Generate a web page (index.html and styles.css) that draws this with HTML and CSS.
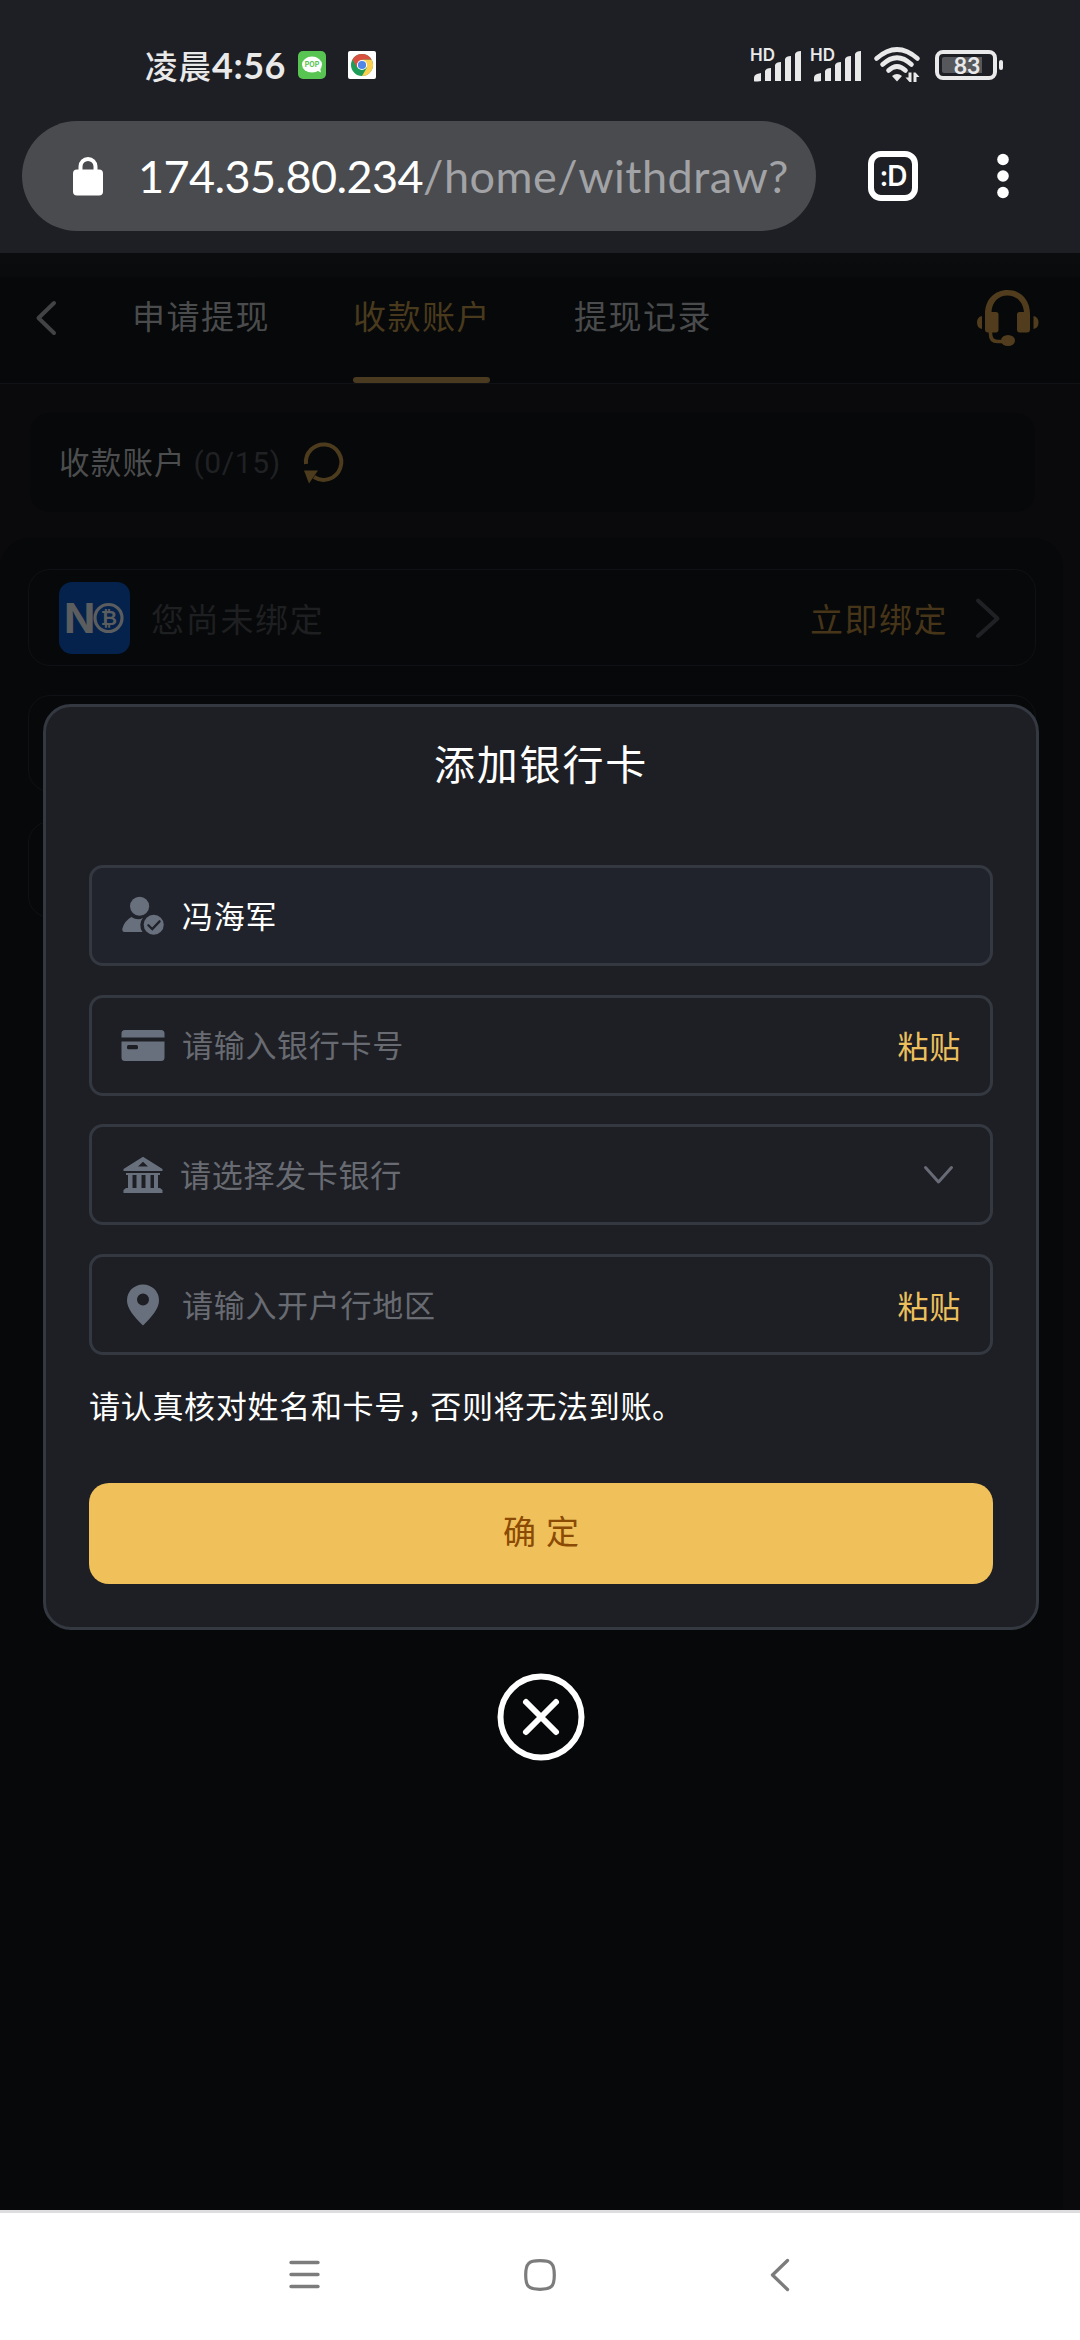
FILE: index.html
```html
<!DOCTYPE html>
<html lang="zh-CN">
<head>
<meta charset="utf-8">
<title>收款账户</title>
<link rel="stylesheet" href="styles.css">
</head>
<body>
<div class="screen">
  <div class="statusbar">
    <span class="clock">凌晨<b>4:56</b></span>
    <svg class="app-line" width="28" height="28" viewBox="0 0 28 28"><rect width="28" height="28" rx="5" fill="#58c452"/><ellipse cx="14" cy="13.600" rx="10" ry="8" fill="#fff"/><path d="M18 19l5 2.400-1-5z" fill="#fff"/><text x="14" y="16.300" text-anchor="middle" class="pop">POP</text></svg>
    <svg class="app-chrome" width="28" height="28" viewBox="0 0 28 28"><rect width="28" height="28" rx="2" fill="#fff"/><circle cx="14" cy="14" r="11" fill="#1f9d58"/><path d="M18.800 16.800L14 25a11 11 0 0 0 9.530-16.500H14z" fill="#fbcf50"/><path d="M14 14L9.200 16.800 4.470 8.500A11 11 0 0 1 23.530 8.500H14z" fill="#d8503f"/><circle cx="14" cy="14" r="5.100" fill="#fff"/><circle cx="14" cy="14" r="4.100" fill="#4f86e8"/></svg>
    <svg class="signals" width="110" height="34" viewBox="0 0 110 34" fill="#e9e9ea"><text x="-1" y="12.500" class="hd" textLength="25">HD</text><g id="bars"><path d="M3 33v-3q0-3 3-4l4-1v8q-7 1-7 0zM14 33V23q1-3 6-3v13zM24 33V17q1-3 6-3v19zM34 33V11q1-3 6-3v25zM44 33V6q1-3 6-3v30z"/></g><text x="59" y="12.500" class="hd" textLength="25">HD</text><use href="#bars" x="60"/></svg>
    <svg class="wifi" width="46" height="35" viewBox="0 0 46 35"><g fill="none" stroke="#e9e9ea" stroke-width="4.600" stroke-linecap="round"><path d="M2.500 11.500Q23-6.500 43.500 11.500M8.500 17.500Q23 4 37.500 17.500M14.500 23.500Q23 15.500 31.500 23.500"/></g><path d="M18 29q5-4 10 0l-5 5.500z" fill="#e9e9ea"/><g fill="#e9e9ea"><path d="M34.500 25.500h3V35h-2l-4-4.500h3zM39.500 25.500h2l4 4.500h-3v5h-3z"/></g></svg>
    <svg class="battery" width="68" height="30" viewBox="0 0 68 30"><rect x="2" y="2" width="58" height="26" rx="6" fill="none" stroke="#e9e9ea" stroke-width="4"/><path d="M9 7h38v16H9q-2 0-2-2V9q0-2 2-2z" fill="#56585c"/><rect x="64" y="10" width="4" height="10" rx="2" fill="#e9e9ea"/><text x="32" y="23.500" text-anchor="middle" class="level">83</text></svg>
  </div>
  <div class="urlbar">
    <div class="address">
      <svg width="30" height="40" viewBox="0 0 30 40"><path d="M7.500 16V10.500a7.500 7.500 0 0 1 15 0V16" fill="none" stroke="#fff" stroke-width="4"/><rect y="13.500" width="30" height="26" rx="4" fill="#fff"/></svg>
      <span class="url"><span class="host">174.35.80.234</span><span class="path">/home/withdraw?</span></span>
    </div>
    <div class="tabcount">:D</div>
    <svg class="more" width="12" height="46" viewBox="0 0 12 46" fill="#fff"><circle cx="6" cy="6.500" r="5.800"/><circle cx="6" cy="23" r="5.800"/><circle cx="6" cy="39.500" r="5.800"/></svg>
  </div>

  <div class="page">
    <div class="header">
      <svg class="back" width="22" height="36" viewBox="0 0 22 36"><path d="M19 3L3.500 18 19 33" fill="none" stroke="#424344" stroke-width="4" stroke-linecap="round" stroke-linejoin="round"/></svg>
      <div class="tabs"><span class="tab">申请提现</span><span class="tab active">收款账户</span><span class="tab">提现记录</span></div>
      <svg class="service" width="62" height="56" viewBox="0 0 62 56"><g fill="#513d1d"><path d="M5 26v13q-5-1-5-6.500T5 26zM56.500 26v13q5-1 5-6.500t-5-6.500zM19 22q2.500 0 2.500 2.500v15q0 3-2.500 3h-8q-3 0-3-3V24C8 9 18 0 30.500 0S53 9 53 24v15.500q0 3-3 3h-7.500q-2.500 0-2.500-3v-15q0-2.500 2.500-2.500H47C46 11.500 39 5.500 30.500 5.500S15 11.500 14.500 22z"/><ellipse cx="31" cy="50.500" rx="7" ry="5.500"/></g><path d="M13.500 41v3q0 7.500 7 7.500h8" fill="none" stroke="#513d1d" stroke-width="3.600"/></svg>
    </div>
    <div class="summary">
      <span class="label">收款账户</span><span class="count">(0/15)</span>
      <svg width="40" height="42" viewBox="0 0 40 42"><path d="M2 22A17.700 17.700 0 1 1 10 35" fill="none" stroke="#4c3b1d" stroke-width="4"/><path d="M0 28.500h14L5 41.500z" fill="#4c3b1d"/></svg>
    </div>
    <div class="accounts">
      <div class="account">
        <svg class="nb" width="71" height="72" viewBox="0 0 71 72"><rect width="71" height="72" rx="13" fill="#04224c"/><text x="5" y="51" class="logo-n">N</text><circle cx="49.500" cy="36" r="13.500" fill="none" stroke="#5b5d5f" stroke-width="3.200"/><text x="50" y="43" text-anchor="middle" class="logo-b">₿</text></svg>
        <span class="unbound">您尚未绑定</span><span class="bind">立即绑定</span>
        <svg width="26" height="40" viewBox="0 0 26 40"><path d="M3 2.500l19.500 18L3 38" fill="none" stroke="#202124" stroke-width="4" stroke-linecap="round" stroke-linejoin="round"/></svg>
      </div>
      <div class="account"></div>
      <div class="account"></div>
    </div>

    <div class="overlay">
      <div class="modal">
        <h1>添加银行卡</h1>
        <div class="fields">
        <div class="field filled">
          <svg width="44" height="39" viewBox="0 0 44 40" fill="#69707d"><circle cx="18.500" cy="10.500" r="9.800"/><path d="M10 21.500q7 4.500 12 .8a12 12 0 0 0-.5 14.700H4Q.3 37 .8 33.500 2.500 26 10 21.500z"/><circle cx="33" cy="29.500" r="10.300"/><path d="M27.500 30l4 4 7.500-8" fill="none" stroke="#20232b" stroke-width="2.400" stroke-linecap="round"/></svg>
          <span class="value">冯海军</span>
        </div>
        <div class="field">
          <svg width="44" height="31" viewBox="0 0 44 31"><path d="M.5 7.500V3.500Q.5 0 4 0h36q3.500 0 3.500 3.500v4zM.5 11.500h43V27.500q0 3.500-3.500 3.500H4Q.5 31 .5 27.500z" fill="#69707d"/><rect x="6" y="15" width="11" height="4.300" rx="1.500" fill="#1d1e23"/></svg>
          <span class="value">请输入银行卡号</span><span class="paste">粘贴</span>
        </div>
        <div class="field">
          <svg width="44" height="38" viewBox="0 0 44 38"><path fill-rule="evenodd" fill="#69707d" d="M22 .8L41.500 13v2h-39v-2zM22 5.800L17 10.500h10zM5 17h34v2h-2v13h2l2.500 2v3h-39v-3L5 32h2V19H5zM11.500 19v13h4V19zm9 0v13h4V19zm9 0v13h3.500V19z"/></svg>
          <span class="value select">请选择发卡银行</span>
          <svg class="chev" width="31" height="20" viewBox="0 0 31 20"><path d="M2.500 2.500l13 14.500 13-14.500" fill="none" stroke="#686b76" stroke-width="3" stroke-linecap="round" stroke-linejoin="round"/></svg>
        </div>
        <div class="field">
          <svg width="44" height="42" viewBox="0 0 44 42"><path fill-rule="evenodd" fill="#69707d" d="M22 .5A15.700 15.700 0 0 1 38 16.500C38 24 31 33 22 41.500 13 33 6 24 6 16.500A15.700 15.700 0 0 1 22 .5zM22 9.500a6 6 0 1 0 0 12 6 6 0 0 0 0-12z"/></svg>
          <span class="value">请输入开户行地区</span><span class="paste">粘贴</span>
        </div>
        </div>
        <p class="notice">请认真核对姓名和卡号<span class="comma">，</span>否则将无法到账。</p>
        <div class="confirm">确<span>定</span></div>
      </div>
      <svg class="close" width="88" height="88" viewBox="0 0 88 88" fill="none" stroke="#fff"><circle cx="44" cy="44" r="40.500" stroke-width="6"/><path d="M29 29l30 30M59 29L29 59" stroke-width="6" stroke-linecap="round"/></svg>
    </div>
  </div>

  <div class="navbar">
    <svg width="32" height="32" viewBox="0 0 32 32" stroke="#7c7c7c" stroke-width="3.400" stroke-linecap="round"><path d="M3 3.500h27M3 15.500h27M3 27.500h27"/></svg>
    <svg class="home" width="32" height="32" viewBox="0 0 32 32"><path d="M16 1.700c11.500 0 14.300 2.800 14.300 14.300S27.500 30.300 16 30.300 1.700 27.500 1.700 16 4.500 1.700 16 1.700z" fill="none" stroke="#7c7c7c" stroke-width="3.200"/></svg>
    <svg class="goback" width="20" height="34" viewBox="0 0 20 34"><path d="M17.500 2.500L2.500 17l15 14.500" fill="none" stroke="#7c7c7c" stroke-width="3.300" stroke-linecap="round" stroke-linejoin="round"/></svg>
  </div>
</div>
</body>
</html>
```
FILE: styles.css
```css
* { box-sizing: border-box; }
body { margin: 0; background: #070809; }
svg { display: block; flex: none; overflow: visible; }
.screen {
  width: 1080px; height: 2340px; display: flex; flex-direction: column; overflow: hidden;
  font-family: "Noto Sans CJK SC", sans-serif; white-space: nowrap;
}

.statusbar { height: 121px; padding: 8px 77px 0 145px; display: flex; align-items: center; background: #1e1f24; color: #e9e9ea; }
.clock { width: 153px; font-size: 32.500px; font-weight: 500; letter-spacing: 1px; line-height: 40px; }
.clock b { font-family: Lato, sans-serif; font-weight: 700; font-size: 36px; letter-spacing: 0.500px; }
.app-chrome { margin-left: 22px; }
.pop { font: 700 7px Inter, sans-serif; fill: #58c452; }
.signals { margin-left: auto; }
.hd { font: 600 17px Inter, sans-serif; }
.wifi { margin-left: 13px; }
.battery { margin-left: 15px; }
.level { font: 700 23px Lato, sans-serif; fill: #e9e9ea; }

.urlbar { height: 132px; padding: 0 71px 22px 22px; display: flex; align-items: center; background: #1e1f24; }
.address { width: 794px; height: 110px; border-radius: 55px; background: #4a4b4e; padding-left: 51px; display: flex; align-items: center; }
.url { margin-left: 35px; font: 400 45px/60px Lato, sans-serif; }
.host { color: #fff; letter-spacing: -0.600px; }
.path { color: #a2a3a6; letter-spacing: 0.500px; }
.tabcount {
  width: 50px; height: 50px; margin-left: 52px; border: 6px solid #fff; border-radius: 13px; color: #fff;
  font: 600 28px/38px Inter, sans-serif; text-align: center; letter-spacing: -1px;
}
.more { margin-left: auto; }

.page { position: relative; height: 1957px; background: #0a0a0c; }
.header {
  height: 131px; padding: 0 41px 0 35px; display: flex; align-items: center;
  background: linear-gradient(#0b0c0d, #0a0b0c 18%, #070809 19%); border-bottom: 1px solid #101215;
}
.tabs { margin-left: 75px; align-self: stretch; display: flex; gap: 84px; }
.tab { width: 137px; color: #4a4b4c; font-size: 33px; letter-spacing: 1.500px; line-height: 125px; }
.tab.active { color: #493a1d; display: flex; flex-direction: column; }
.tab.active::after { content: ""; height: 6px; margin-top: -1px; border-radius: 3px; background: #493a20; }
.service { margin-left: auto; }
.summary { margin: 29px 45px 0 30px; height: 99px; border-radius: 20px; background: #070809; padding-left: 29px; display: flex; align-items: center; }
.label { width: 134.500px; font-size: 30.500px; letter-spacing: 1.200px; color: #4c4d4e; padding-bottom: 3px; }
.count { width: 110.500px; font: 400 30px Roboto, sans-serif; letter-spacing: 0.600px; color: #202124; }
.accounts { margin: 26px 17px 0 0; padding: 31px 27px 0 28px; border-radius: 30px 30px 0 0; height: 1672px; background: #070809; display: flex; flex-direction: column; gap: 29px; }
.account { height: 97px; border: 1px solid #0f1114; border-radius: 22px; padding: 0 34px 0 30px; display: flex; align-items: center; flex: none; }
.logo-n { font: 700 41px Inter, sans-serif; fill: #5b5d5f; }
.logo-b { font: 700 20px "DejaVu Sans", sans-serif; fill: #5b5d5f; }
.unbound { margin-left: 21px; font-size: 33px; letter-spacing: 1.700px; color: #1e1f21; }
.bind { margin-left: auto; margin-right: 27px; font-size: 33px; letter-spacing: 1.500px; color: #463519; }

.overlay { position: absolute; inset: 451px 0 0 0; padding: 0 41px 0 43px; display: flex; flex-direction: column; align-items: center; }
.modal { width: 996px; height: 926px; border: 3px solid #343841; border-radius: 28px; background: #1e1f24; padding: 0 43px; display: flex; flex-direction: column; }
h1 { margin: 0; height: 158px; padding-top: 23px; font-size: 41px; font-weight: 400; line-height: 64px; letter-spacing: 1.800px; text-align: center; color: #fff; }
.fields { display: flex; flex-direction: column; gap: 28.700px; }
.field { height: 101px; border: 3px solid #343841; border-radius: 14px; padding: 0 29px; display: flex; align-items: center; color: #686b72; }
.filled { background: #20232b; color: #fff; }
.value { margin-left: 17px; font-size: 31px; letter-spacing: 0.700px; line-height: 40px; padding-bottom: 2px; }
.select { margin-left: 15px; }
.paste { margin-left: auto; font-size: 31px; letter-spacing: 0.700px; line-height: 40px; color: #edc05d; }
.chev { margin-left: auto; margin-right: 7px; }
.notice { margin: 30px 0 0; height: 98px; font-size: 31px; letter-spacing: 0.700px; line-height: 40px; color: #fff; }
.comma { font-feature-settings: "halt"; padding-left: 1px; padding-right: 7px; }
.confirm { height: 101px; border-radius: 20px; background: #f0c15b; color: #8b4b05; font-size: 33px; line-height: 94px; text-align: center; }
.confirm span { margin-left: 10px; }
.close { margin-top: 43px; }

.navbar { height: 130px; border-top: 3px solid #dddde0; background: #fff; padding: 0 0 3px 288px; display: flex; align-items: center; }
.home { margin-left: 204px; }
.goback { margin-left: 214px; }
```
